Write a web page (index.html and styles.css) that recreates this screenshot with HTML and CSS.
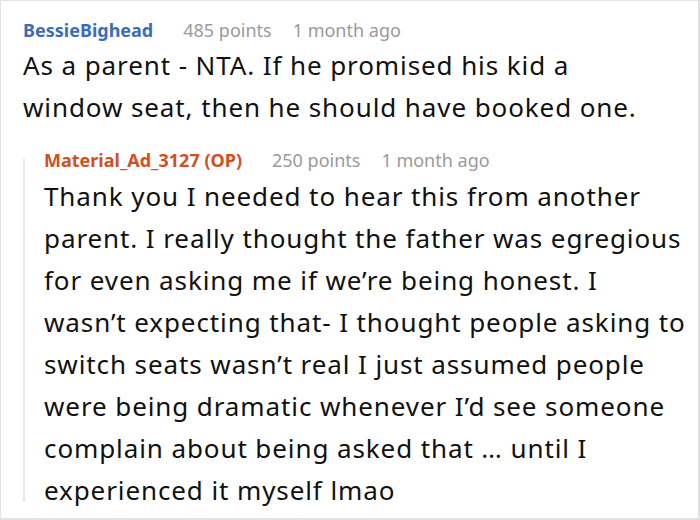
FILE: index.html
```html
<!DOCTYPE html>
<html>
<head>
<meta charset="utf-8">
<link rel="stylesheet" href="styles.css">
</head>
<body>
<div class="frame">
  <div class="comment">
    <div class="meta">
      <span class="author author-blue">BessieBighead</span>
      <span class="info">485 points</span>
      <span class="info">1 month ago</span>
    </div>
    <p class="text">As a parent - NTA. If he promised his kid a<br>window seat, then he should have booked one.</p>
    <div class="reply">
      <div class="meta">
        <span class="author author-orange">Material_Ad_3127 (OP)</span>
        <span class="info">250 points</span>
        <span class="info">1 month ago</span>
      </div>
      <p class="text text-reply">Thank you I needed to hear this from another<br>parent. I really thought the father was egregious<br>for even asking me if we’re being honest. I<br>wasn’t expecting that- I thought people asking to<br>switch seats wasn’t real I just assumed people<br>were being dramatic whenever I’d see someone<br>complain about being asked that … until I<br>experienced it myself lmao</p>
    </div>
  </div>
</div>
</body>
</html>
```

FILE: styles.css
```css
html, body {
  margin: 0;
  padding: 0;
  background: #ffffff;
}
.frame {
  box-sizing: border-box;
  width: 700px;
  height: 520px;
  border-style: solid;
  border-color: #e2e2e2;
  border-width: 1px 2px 2px 1px;
  overflow: hidden;
  font-family: "Noto Sans", "DejaVu Sans", sans-serif;
  color: #111111;
}
.comment {
  padding: 17px 0 0 22px;
}
.meta {
  display: flex;
  align-items: baseline;
  gap: 21px;
  font-size: 18px;
  line-height: 24px;
}
.author {
  font-weight: 700;
  margin-right: 9px;
}
.author-blue { color: #3b6cbc; }
.author-orange { color: #d2501f; }
.info { color: #9a9a9a; }
.text {
  margin: 2px 0 0;
  font-size: 26px;
  line-height: 42px;
  letter-spacing: 0.9px;
}
.text-reply {
  margin-top: 3px;
}
.reply {
  position: relative;
  margin-top: 20px;
  padding-left: 21px;
}
.reply::before {
  content: "";
  position: absolute;
  left: 0;
  top: 11px;
  bottom: 9px;
  width: 2px;
  background: #e8e8e8;
}
```
